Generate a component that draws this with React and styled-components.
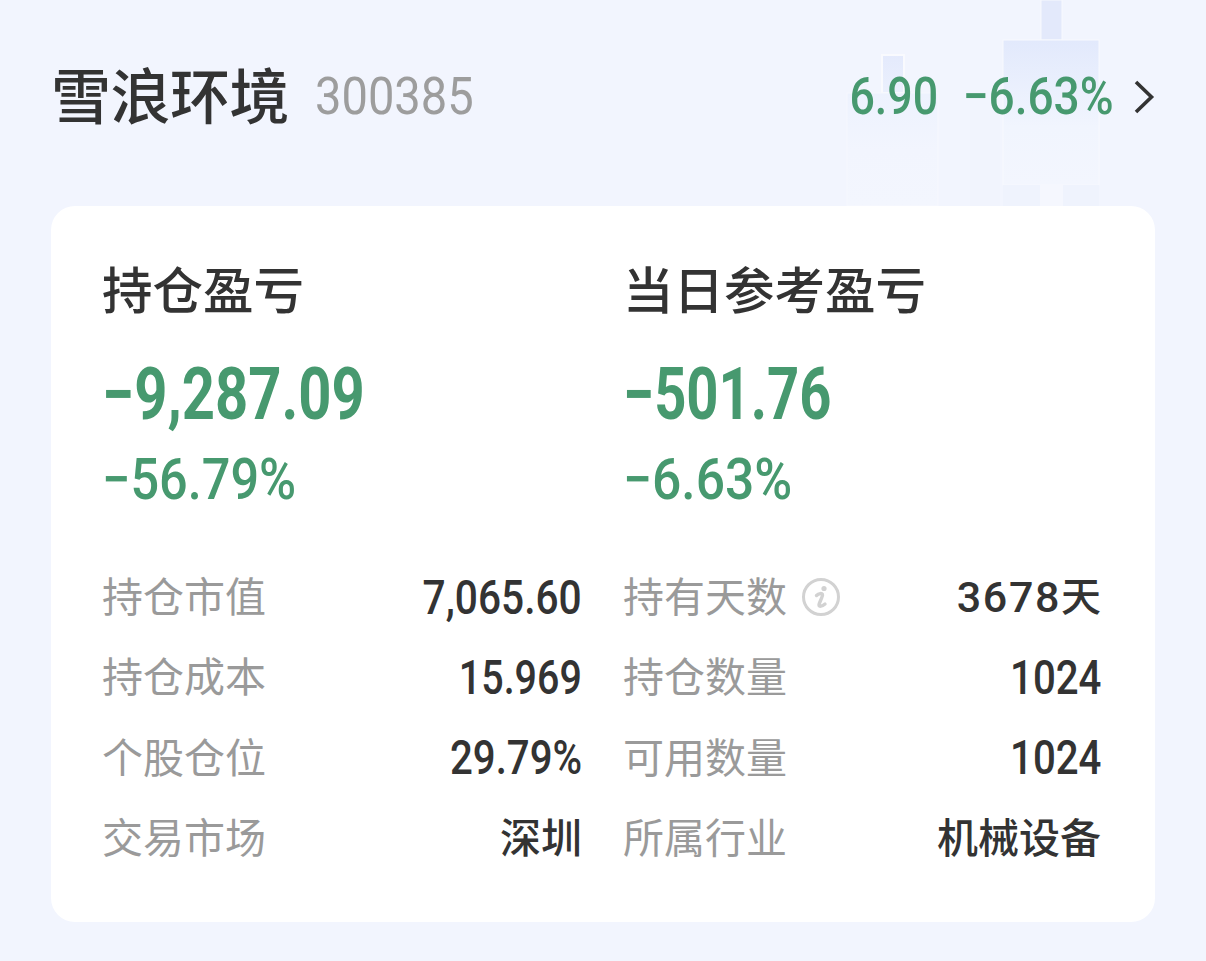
import React from 'react';
import styled, { createGlobalStyle } from 'styled-components';

const GlobalStyle = createGlobalStyle`
  html, body { margin: 0; padding: 0; background: #f2f5fe; }
  body { font-family: "Noto Sans CJK SC", "Noto Sans", sans-serif; }
`;

const CJK = '"Noto Sans CJK SC", sans-serif';
const NUM = 'Roboto, "Noto Sans CJK SC", sans-serif';

const Page = styled.div`
  position: relative;
  width: 1206px;
  height: 961px;
  overflow: hidden;
  background: #f2f5fe;
  box-sizing: border-box;
  padding: 0 51px;
`;

const Candles = styled.svg`
  position: absolute;
  left: 840px;
  top: 0;
`;

const Header = styled.div`
  position: relative;
  height: 206px;
  display: flex;
  align-items: flex-start;
  justify-content: space-between;
  padding-top: 62px;
  box-sizing: border-box;
`;

const NameGroup = styled.div`
  display: flex;
  align-items: center;
  gap: 26px;
  height: 70px;
`;

const Name = styled.div`
  font-family: ${CJK};
  font-size: 60px;
  line-height: 70px;
  font-weight: 500;
  letter-spacing: -0.5px;
  color: #333;
  margin-top: -8px;
`;

const Code = styled.div`
  font-family: ${NUM};
  font-size: 52px;
  color: #9d9d9d;
  line-height: 70px;
  transform: scaleX(0.905);
  transform-origin: left center;
`;

const Quote = styled.div`
  display: flex;
  align-items: center;
  height: 70px;
  gap: 19px;
`;

const QuoteNumbers = styled.div`
  display: flex;
  gap: 5px;
`;

const QuoteText = styled.div`
  font-family: ${NUM};
  font-size: 52px;
  line-height: 70px;
  font-weight: 500;
  color: #47996f;
  transform: scaleX(${props => props.$scale});
  transform-origin: right center;
  white-space: nowrap;
`;

const Card = styled.div`
  background: #fff;
  border-radius: 24px;
  height: 716px;
  box-sizing: border-box;
  padding: 51px 53px 0 51px;
  display: grid;
  grid-template-columns: 480px 478px;
  column-gap: 41px;
`;

const Column = styled.div`
  display: flex;
  flex-direction: column;
`;

const Heading = styled.div`
  font-family: ${CJK};
  font-size: 50.5px;
  line-height: 60px;
  font-weight: 500;
  color: #333;
`;

const BigValue = styled.div`
  font-family: ${NUM};
  font-size: 72px;
  line-height: 84px;
  margin-top: 36px;
  font-weight: 700;
  color: #47996f;
  transform: scaleX(${props => props.$scale});
  transform-origin: left center;
  white-space: nowrap;
`;

const Percent = styled.div`
  font-family: ${NUM};
  font-size: 57px;
  line-height: 62px;
  margin-top: 12px;
  color: #47996f;
  font-weight: 500;
  transform: scaleX(${props => props.$scale});
  transform-origin: left center;
  white-space: nowrap;
`;

const Rows = styled.div`
  margin-top: 46px;
  display: flex;
  flex-direction: column;
`;

const Row = styled.div`
  height: 80.3px;
  display: flex;
  align-items: center;
  justify-content: space-between;
`;

const Label = styled.div`
  font-family: ${CJK};
  font-size: 41px;
  color: #9a9a9a;
  display: flex;
  align-items: center;
  gap: 14px;
  margin-top: -6px;
`;

const Value = styled.div`
  font-family: ${NUM};
  font-size: 49px;
  font-weight: 500;
  color: #333;
  white-space: nowrap;
  transform: scaleX(${props => props.$scale || 0.835});
  transform-origin: right center;
`;

const TextValue = styled.div`
  font-family: ${CJK};
  font-size: 41px;
  font-weight: 500;
  color: #333;
  white-space: nowrap;
  margin-top: -6px;
`;

const DaysValue = styled.div`
  font-family: ${NUM};
  font-size: 43px;
  font-weight: 500;
  color: #333;
  white-space: nowrap;
  letter-spacing: 1.6px;
  display: flex;
  align-items: center;
`;

const DaysUnit = styled.span`
  font-family: ${CJK};
  font-size: 40px;
  letter-spacing: 0;
  margin-top: -6px;
`;

const InfoSvg = styled.svg`
  margin-top: 6px;
`;

const CandleArt = () => (
  <Candles width="300" height="206" viewBox="0 0 300 206" aria-hidden="true">
    <defs>
      <linearGradient id="top" x1="0" y1="0" x2="0" y2="1">
        <stop offset="0" stopColor="#e2e9fc" />
        <stop offset="0.6" stopColor="#f1f5fe" />
        <stop offset="1" stopColor="#f3f6fe" />
      </linearGradient>
      <linearGradient id="small" x1="0" y1="0" x2="0" y2="1">
        <stop offset="0" stopColor="#e4eafc" />
        <stop offset="1" stopColor="#ebf0fd" />
      </linearGradient>
      <linearGradient id="low" x1="0" y1="0" x2="0" y2="1">
        <stop offset="0" stopColor="#edf2fe" />
        <stop offset="0.5" stopColor="#f2f5fe" />
        <stop offset="1" stopColor="#f3f6fe" />
      </linearGradient>
    </defs>
    <rect x="42" y="55" width="22" height="38" fill="url(#small)" stroke="#f9fafe" strokeWidth="2" />
    <rect x="7" y="93" width="91" height="113" fill="url(#low)" stroke="#f6f8fe" strokeWidth="1" />
    <rect x="130" y="110" width="30" height="96" fill="#f1f4fd" />
    <rect x="201" y="0" width="21" height="40" fill="#e3e9fb" stroke="#f7f9fe" strokeWidth="1" />
    <rect x="163" y="40" width="96" height="145" fill="url(#top)" stroke="#f7f9fe" strokeWidth="1" />
    <rect x="163" y="185" width="37" height="21" fill="#eff3fd" />
    <rect x="223" y="185" width="36" height="21" fill="#eff3fd" />
    <rect x="200" y="185" width="23" height="21" fill="#f5f7fe" />
  </Candles>
);

const InfoIcon = () => (
  <InfoSvg width="40" height="40" viewBox="0 0 40 40" aria-hidden="true">
    <circle cx="20" cy="20" r="17.5" fill="none" stroke="#d2d2d2" strokeWidth="3" />
    <circle cx="23" cy="11.5" r="2.6" fill="#d2d2d2" />
    <path d="M15.5 18.5 C17.5 16.5 21.5 15.5 21.5 18 C21.5 20 18 26 18 28 C18 30 21 29.5 24 27" fill="none" stroke="#d2d2d2" strokeWidth="3.4" strokeLinecap="round" />
  </InfoSvg>
);

const Chevron = () => (
  <svg width="22" height="36" viewBox="0 0 22 36" aria-hidden="true">
    <path d="M3 3 L18.5 18 L3 33" fill="none" stroke="#333" strokeWidth="3.6" />
  </svg>
);

const left = [
  ['持仓市值', <Value $scale={0.83}>7,065.60</Value>],
  ['持仓成本', <Value $scale={0.805}>15.969</Value>],
  ['个股仓位', <Value $scale={0.82}>29.79%</Value>],
  ['交易市场', <TextValue>深圳</TextValue>],
];

const right = [
  ['持有天数', <DaysValue>3678<DaysUnit>天</DaysUnit></DaysValue>, true],
  ['持仓数量', <Value $scale={0.82}>1024</Value>],
  ['可用数量', <Value $scale={0.82}>1024</Value>],
  ['所属行业', <TextValue>机械设备</TextValue>],
];

const renderRows = rows =>
  rows.map(([label, value, info]) => (
    <Row key={label}>
      <Label>
        {label}
        {info && <InfoIcon />}
      </Label>
      {value}
    </Row>
  ));

export default function App() {
  return (
    <Page>
      <GlobalStyle />
      <CandleArt />
      <Header>
        <NameGroup>
          <Name>雪浪环境</Name>
          <Code>300385</Code>
        </NameGroup>
        <Quote>
          <QuoteNumbers>
            <QuoteText $scale={0.86}>6.90</QuoteText>
            <QuoteText $scale={0.885}>−6.63%</QuoteText>
          </QuoteNumbers>
          <Chevron />
        </Quote>
      </Header>
      <Card>
        <Column>
          <Heading>持仓盈亏</Heading>
          <BigValue $scale={0.805}>−9,287.09</BigValue>
          <Percent $scale={0.885}>−56.79%</Percent>
          <Rows>{renderRows(left)}</Rows>
        </Column>
        <Column>
          <Heading>当日参考盈亏</Heading>
          <BigValue $scale={0.78}>−501.76</BigValue>
          <Percent $scale={0.905}>−6.63%</Percent>
          <Rows>{renderRows(right)}</Rows>
        </Column>
      </Card>
    </Page>
  );
}
